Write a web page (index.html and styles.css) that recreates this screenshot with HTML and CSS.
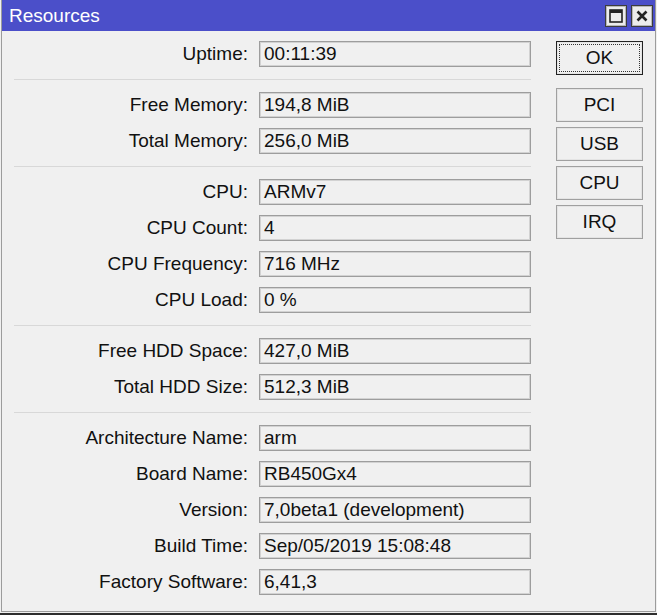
FILE: index.html
```html
<!DOCTYPE html>
<html lang="en">
<head>
  <meta charset="UTF-8">
  <title>Resources</title>
  <link rel="stylesheet" href="styles.css">
</head>
<body>
  <div class="window">
    <div class="titlebar">
      <span class="title">Resources</span>
      <div class="title-btns">
        <span class="tbtn">
          <svg width="14" height="14" viewBox="0 0 14 14">
            <rect x="1" y="1" width="12" height="12" fill="none" stroke="#222" stroke-width="1.6"/>
            <rect x="1" y="1" width="12" height="3" fill="#222"/>
          </svg>
        </span>
        <span class="tbtn">
          <svg width="14" height="14" viewBox="0 0 14 14">
            <path d="M2.5 2.5 L11.5 11.5 M11.5 2.5 L2.5 11.5" stroke="#222" stroke-width="2.6"/>
          </svg>
        </span>
      </div>
    </div>

    <div class="content">
      <div class="form">
        <div class="group">
          <div class="row"><span class="label">Uptime:</span><span class="field">00:11:39</span></div>
        </div>
        <div class="sep"></div>
        <div class="group">
          <div class="row"><span class="label">Free Memory:</span><span class="field">194,8 MiB</span></div>
          <div class="row"><span class="label">Total Memory:</span><span class="field">256,0 MiB</span></div>
        </div>
        <div class="sep"></div>
        <div class="group">
          <div class="row"><span class="label">CPU:</span><span class="field">ARMv7</span></div>
          <div class="row"><span class="label">CPU Count:</span><span class="field">4</span></div>
          <div class="row"><span class="label">CPU Frequency:</span><span class="field">716 MHz</span></div>
          <div class="row"><span class="label">CPU Load:</span><span class="field">0 %</span></div>
        </div>
        <div class="sep"></div>
        <div class="group">
          <div class="row"><span class="label">Free HDD Space:</span><span class="field">427,0 MiB</span></div>
          <div class="row"><span class="label">Total HDD Size:</span><span class="field">512,3 MiB</span></div>
        </div>
        <div class="sep"></div>
        <div class="group">
          <div class="row"><span class="label">Architecture Name:</span><span class="field">arm</span></div>
          <div class="row"><span class="label">Board Name:</span><span class="field">RB450Gx4</span></div>
          <div class="row"><span class="label">Version:</span><span class="field">7,0beta1 (development)</span></div>
          <div class="row"><span class="label">Build Time:</span><span class="field">Sep/05/2019 15:08:48</span></div>
          <div class="row"><span class="label">Factory Software:</span><span class="field">6,41,3</span></div>
        </div>
      </div>

      <div class="buttons">
        <button class="btn btn-ok">OK</button>
        <div class="btn-list">
          <button class="btn">PCI</button>
          <button class="btn">USB</button>
          <button class="btn">CPU</button>
          <button class="btn">IRQ</button>
        </div>
      </div>
    </div>
  </div>
  <div class="shadow"></div>
</body>
</html>
```

FILE: styles.css
```css
/* reset */
*{
  margin: 0;
  padding: 0;
  box-sizing: border-box;
}
body{
  width: 657px;
  height: 615px;
  background-color: #f0f0f0;
  font-family: "Liberation Sans", Arial, sans-serif;
  font-size: 19px;
  color: #111;
  overflow: hidden;
}
.window{
  margin-left: 1px;
  width: 655px;
  height: 612px;
  border: 1px solid #9c9c9c;
  border-top: none;
  background-color: #f0f0f0;
  display: flex;
  flex-direction: column;
}

/* title bar */
.titlebar{
  height: 31px;
  background-color: #4b4fc9;
  display: flex;
  align-items: center;
  justify-content: space-between;
  padding: 0 2px 0 7px;
}
.title{
  color: #fff;
  font-size: 19px;
  line-height: 31px;
}
.title-btns{
  display: flex;
  gap: 4px;
}
.tbtn{
  width: 22px;
  height: 22px;
  background-color: #ececec;
  border: 1px solid #3c3c3c;
  box-shadow: inset 0 0 0 1px #b8b8b8;
  display: flex;
  align-items: center;
  justify-content: center;
}

/* main area */
.content{
  flex: 1;
  display: flex;
  gap: 25px;
  padding: 10px 11px 0 12px;
}
.form{
  width: 517px;
}
.group{
  display: flex;
  flex-direction: column;
  gap: 10px;
}
.row{
  display: grid;
  grid-template-columns: 234px 272px;
  column-gap: 11px;
  height: 26px;
}
.label{
  text-align: right;
  line-height: 26px;
  white-space: nowrap;
}
.field{
  border: 1px solid #9d9d9d;
  box-shadow: inset 0 0 0 1px #d2d2d2;
  padding-left: 4px;
  line-height: 24px;
  white-space: nowrap;
  overflow: hidden;
}
.sep{
  height: 1px;
  margin: 12px 0;
  background-color: #d8d8d8;
}

/* buttons */
.buttons{
  width: 87px;
  display: flex;
  flex-direction: column;
  gap: 13px;
}
.btn-list{
  display: flex;
  flex-direction: column;
  gap: 5px;
}
.btn{
  height: 34px;
  width: 87px;
  background-color: #f0f0f0;
  border: 1px solid #a0a0a0;
  box-shadow: inset 0 0 0 1px #e4e4e4;
  font-family: "Liberation Sans", Arial, sans-serif;
  font-size: 19px;
  color: #111;
}
.btn-ok{
  border: 1px solid #222;
  outline: 1px dotted #333;
  outline-offset: -4px;
}

.shadow{
  height: 3px;
  margin-top: 1px;
  background-color: #2e2e2e;
}
```
